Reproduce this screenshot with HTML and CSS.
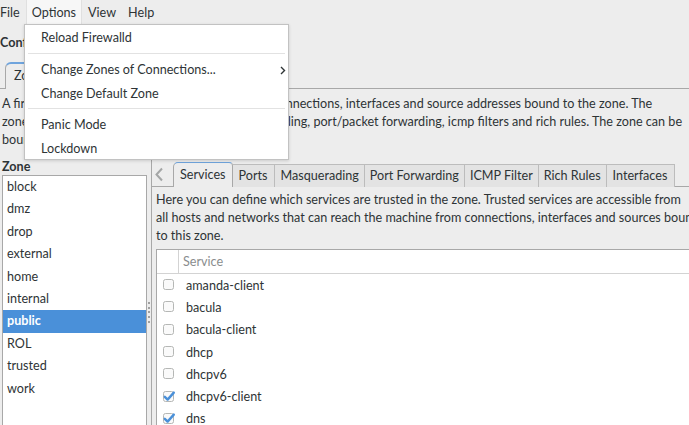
FILE: index.html
```
<!DOCTYPE html>
<html>
<head>
<meta charset="utf-8">
<link rel="stylesheet" href="styles.css">
</head>
<body>
<div class="window">
  <div class="menubar">
    <span class="mitem">File</span>
    <span class="mitem open">Options</span>
    <span class="mitem">View</span>
    <span class="mitem">Help</span>
  </div>
  <div class="config-row"><span class="bold">Configuration:</span></div>
  <div class="top-notebook">
    <div class="top-tabs">
      <div class="ttab active">Zones</div>
      <div class="ttab">Services</div>
      <div class="ttab">ICMP Types</div>
    </div>
    <div class="top-page">
      <p class="desc">A firewall zone defines the trust level of network connections, interfaces and source addresses bound to the zone. The<br>zone combines services, ports, protocols, masquerading, port/packet forwarding, icmp filters and rich rules. The zone can be<br>bound to interfaces and sources.</p>
      <div class="paned">
        <div class="zone-col">
          <div class="zone-label">Zone</div>
          <div class="zone-list">
            <div class="zrow">block</div>
            <div class="zrow">dmz</div>
            <div class="zrow">drop</div>
            <div class="zrow">external</div>
            <div class="zrow">home</div>
            <div class="zrow">internal</div>
            <div class="zrow selected">public</div>
            <div class="zrow">ROL</div>
            <div class="zrow">trusted</div>
            <div class="zrow">work</div>
          </div>
        </div>
        <div class="handle"><span></span><span></span><span></span><span></span><span></span></div>
        <div class="zone-notebook">
          <div class="ztabs">
            <div class="scroll-arrow"><svg width="10" height="15" viewBox="0 0 10 15"><path d="M8 1.5 L2.5 7.5 L8 13.5" fill="none" stroke="#a4a6a6" stroke-width="2"/></svg></div>
            <div class="ztab active">Services</div>
            <div class="ztab wide">Ports</div>
            <div class="ztab">Masquerading</div>
            <div class="ztab">Port Forwarding</div>
            <div class="ztab">ICMP Filter</div>
            <div class="ztab">Rich Rules</div>
            <div class="ztab wide">Interfaces</div>
          </div>
          <div class="zpage">
            <p class="svc-desc">Here you can define which services are trusted in the zone. Trusted services are accessible from<br>all hosts and networks that can reach the machine from connections, interfaces and sources bound<br>to this zone.</p>
            <div class="tree">
              <div class="tree-main">
                <div class="thead"><div class="hcheck"></div><div class="hname">Service</div></div>
                <div class="trow"><svg class="cb" viewBox="0 0 14 14"><rect x="1.5" y="1.5" width="10" height="10" rx="2" class="box"/></svg>amanda-client</div>
                <div class="trow"><svg class="cb" viewBox="0 0 14 14"><rect x="1.5" y="1.5" width="10" height="10" rx="2" class="box"/></svg>bacula</div>
                <div class="trow"><svg class="cb" viewBox="0 0 14 14"><rect x="1.5" y="1.5" width="10" height="10" rx="2" class="box"/></svg>bacula-client</div>
                <div class="trow"><svg class="cb" viewBox="0 0 14 14"><rect x="1.5" y="1.5" width="10" height="10" rx="2" class="box"/></svg>dhcp</div>
                <div class="trow"><svg class="cb" viewBox="0 0 14 14"><rect x="1.5" y="1.5" width="10" height="10" rx="2" class="box"/></svg>dhcpv6</div>
                <div class="trow"><svg class="cb" viewBox="0 0 14 14"><rect x="1.5" y="1.5" width="10" height="10" rx="2" class="box"/><path d="M2.8 6.8 L5.6 9.6 L11.8 2.6" class="tick"/></svg>dhcpv6-client</div>
                <div class="trow"><svg class="cb" viewBox="0 0 14 14"><rect x="1.5" y="1.5" width="10" height="10" rx="2" class="box"/><path d="M2.8 6.8 L5.6 9.6 L11.8 2.6" class="tick"/></svg>dns</div>
              </div>
              <div class="vscroll"><div class="slider"></div></div>
            </div>
          </div>
        </div>
      </div>
    </div>
  </div>

  <div class="menu">
    <div class="menu-item">Reload Firewalld</div>
    <div class="menu-sep"></div>
    <div class="menu-item sub">Change Zones of Connections...<svg class="subarrow" width="6" height="9" viewBox="0 0 6 9"><path d="M1 1 L4.5 4.5 L1 8" fill="none" stroke="#2e3436" stroke-width="1.4"/></svg></div>
    <div class="menu-item">Change Default Zone</div>
    <div class="menu-sep second"></div>
    <div class="menu-item">Panic Mode</div>
    <div class="menu-item">Lockdown</div>
  </div>
</div>
</body>
</html>
```
FILE: styles.css
```
html, body {
  margin: 0;
  padding: 0;
}
body {
  width: 689px;
  height: 425px;
  overflow: hidden;
  background: #ededed;
  font-family: "Lato", "Liberation Sans", sans-serif;
  font-size: 12.6px;
  color: #2e3436;
}
.window {
  position: relative;
  width: 720px;
  height: 425px;
  overflow: hidden;
}
.menubar {
  display: flex;
  height: 24px;
  margin-left: -6px;
  background: #ededed;
}
.mitem {
  padding: 2px 6px 0;
  line-height: 22px;
}
.mitem.open {
  background: #f7f7f7;
  box-shadow: inset 1px 0 0 #e0e0e0, inset -1px 0 0 #e0e0e0;
}
.config-row {
  height: 38px;
  line-height: 38px;
}
.bold { font-weight: bold; }

.top-tabs {
  display: flex;
  padding-left: 5px;
  border-bottom: 1px solid #a8a8a8;
  box-sizing: border-box;
  height: 27px;
  align-items: flex-end;
}
.ttab {
  height: 24px;
  line-height: 24px;
  padding: 0 8px;
  border: 1px solid #a8a8a8;
  border-bottom: none;
  border-radius: 4px 4px 0 0;
  margin-bottom: -1px;
  background: #e2e2e2;
}
.ttab.active {
  background: #ededed;
  border-top: 2px solid #6fa4dd;
  border-radius: 6px 4px 0 0;
  height: 25px;
}
.top-page {
  padding: 6px 0 0 2px;
}
.desc {
  margin: 0;
  line-height: 18px;
  white-space: nowrap;
}
.paned {
  display: flex;
  margin-top: 9px;
}
.zone-col {
  width: 145px;
  flex: none;
}
.zone-label {
  font-weight: bold;
  line-height: 17px;
  height: 17px;
}
.zone-list {
  background: #fff;
  border: 1px solid #a8a8a8;
  height: 300px;
}
.zrow {
  height: 22.4px;
  line-height: 22.4px;
  padding-left: 4px;
}
.zrow.selected {
  background: #4a90d9;
  color: #fff;
  font-weight: bold;
}
.handle {
  width: 4px;
  flex: none;
  display: flex;
  flex-direction: column;
  align-items: flex-start;
  padding-top: 144px;
  padding-left: 1px;
  box-sizing: border-box;
}
.handle span {
  width: 2px;
  height: 2px;
  background: #a0a0a0;
  margin-bottom: 2.7px;
}
.zone-notebook {
  flex: 1;
  border-left: 1px solid #a8a8a8;
  padding-top: 3px;
}
.ztabs {
  display: flex;
  align-items: flex-end;
  height: 25px;
  border-bottom: 1px solid #a8a8a8;
}
.scroll-arrow {
  width: 19px;
  align-self: center;
  display: flex;
  padding-left: 2px;
  padding-top: 1px;
}
.ztab {
  height: 22px;
  line-height: 22px;
  padding: 0 5px;
  border: 1px solid #bcbcbc;
  border-bottom: none;
  border-left: none;
  background: #e3e3e3;
  margin-bottom: -1px;
}
.ztab.wide {
  padding: 0 7px 0 6px;
}
.ztab.active {
  height: 24px;
  line-height: 24px;
  background: #ededed;
  border-left: 1px solid #a8a8a8;
  border-right: 1px solid #a8a8a8;
  border-top: 1px solid #6fa4dd;
  border-radius: 5px 4px 0 0;
  padding: 0 6px;
}
.zpage {
  padding: 4px 0 0 4px;
}
.svc-desc {
  margin: 0;
  line-height: 18px;
  white-space: nowrap;
}
.tree {
  margin-top: 4px;
  display: flex;
  border: 1px solid #a8a8a8;
  background: #fff;
  height: 240px;
}
.tree-main {
  flex: 1;
}
.thead {
  display: flex;
  height: 23px;
  border-bottom: 1px solid #d3d3d3;
  color: #8a8d8e;
}
.hcheck {
  width: 21px;
  border-right: 1px solid #d3d3d3;
}
.hname {
  line-height: 23px;
  padding-left: 4px;
}
.trow {
  height: 22.3px;
  display: flex;
  align-items: center;
}
.cb {
  width: 14px;
  height: 14px;
  margin: 0 10px 0 5px;
}
.cb .box {
  fill: #fafafa;
  stroke: #b5b7b5;
  stroke-width: 1;
}
.cb .tick {
  fill: none;
  stroke: #4a90d9;
  stroke-width: 2.4;
  stroke-linecap: round;
  stroke-linejoin: round;
}
.vscroll {
  width: 16px;
  background: #cfd0d0;
  padding: 3px 0 0 2px;
  box-sizing: border-box;
}
.slider {
  width: 10px;
  height: 32px;
  background: #8e9192;
  border-radius: 4px;
}

.menu {
  position: absolute;
  left: 24px;
  top: 24px;
  width: 265px;
  box-sizing: border-box;
  padding: 1px 0 0;
  height: 136px;
  background: #fff;
  border: 1px solid #c2c2c2;
  box-shadow: 0 1px 3px rgba(0,0,0,0.15);
}
.menu-item {
  height: 24px;
  line-height: 24px;
  padding-left: 16px;
  position: relative;
}
.subarrow {
  position: absolute;
  right: 2px;
  top: 8px;
}
.menu-sep {
  height: 1px;
  background: #e2e2e2;
  margin: 3px 3px 4px;
}
.menu-sep.second {
  margin: 2px 3px 4px;
}
```
